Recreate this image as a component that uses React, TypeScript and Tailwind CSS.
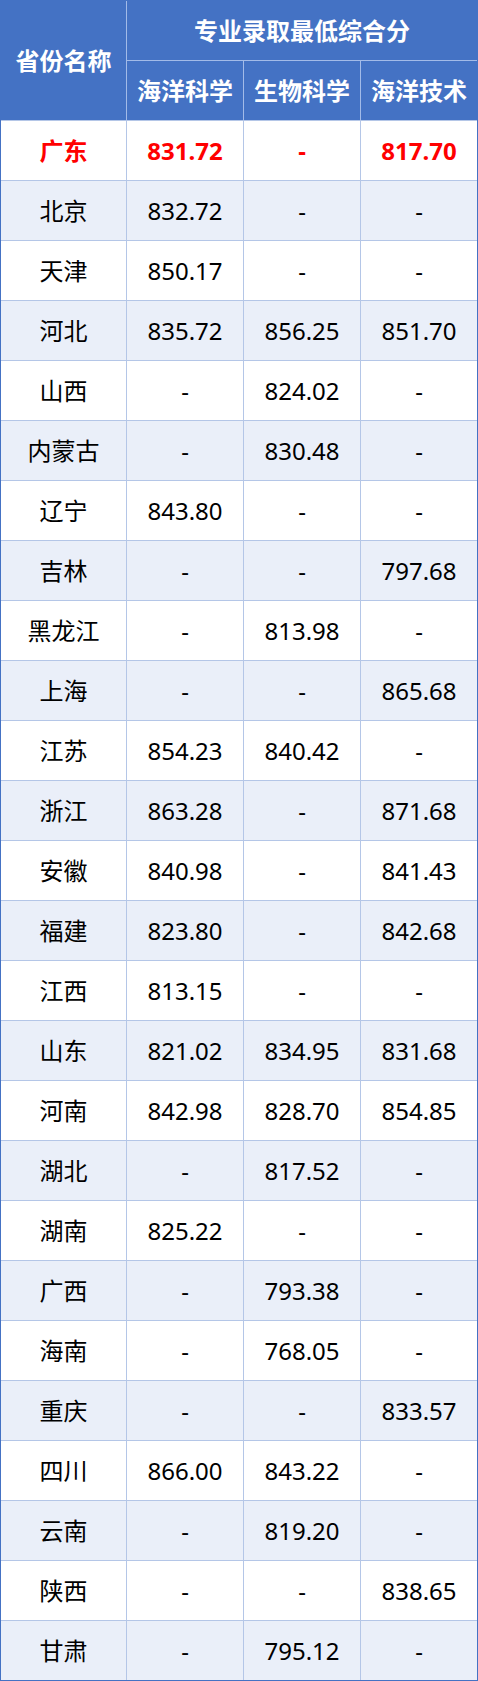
import React from 'react';

type Row = { name: string; a: string; b: string; c: string; hot?: boolean };

const rows: Row[] = [
  { name: '广东', a: '831.72', b: '-', c: '817.70', hot: true },
  { name: '北京', a: '832.72', b: '-', c: '-' },
  { name: '天津', a: '850.17', b: '-', c: '-' },
  { name: '河北', a: '835.72', b: '856.25', c: '851.70' },
  { name: '山西', a: '-', b: '824.02', c: '-' },
  { name: '内蒙古', a: '-', b: '830.48', c: '-' },
  { name: '辽宁', a: '843.80', b: '-', c: '-' },
  { name: '吉林', a: '-', b: '-', c: '797.68' },
  { name: '黑龙江', a: '-', b: '813.98', c: '-' },
  { name: '上海', a: '-', b: '-', c: '865.68' },
  { name: '江苏', a: '854.23', b: '840.42', c: '-' },
  { name: '浙江', a: '863.28', b: '-', c: '871.68' },
  { name: '安徽', a: '840.98', b: '-', c: '841.43' },
  { name: '福建', a: '823.80', b: '-', c: '842.68' },
  { name: '江西', a: '813.15', b: '-', c: '-' },
  { name: '山东', a: '821.02', b: '834.95', c: '831.68' },
  { name: '河南', a: '842.98', b: '828.70', c: '854.85' },
  { name: '湖北', a: '-', b: '817.52', c: '-' },
  { name: '湖南', a: '825.22', b: '-', c: '-' },
  { name: '广西', a: '-', b: '793.38', c: '-' },
  { name: '海南', a: '-', b: '768.05', c: '-' },
  { name: '重庆', a: '-', b: '-', c: '833.57' },
  { name: '四川', a: '866.00', b: '843.22', c: '-' },
  { name: '云南', a: '-', b: '819.20', c: '-' },
  { name: '陕西', a: '-', b: '-', c: '838.65' },
  { name: '甘肃', a: '-', b: '795.12', c: '-' },
];

const font = { fontFamily: '"Noto Sans", "Noto Sans CJK SC", sans-serif' };

export default function App() {
  return (
    <div className="w-[478px] bg-white" style={font}>
      <div className="border border-[#4472c4] text-[24px] leading-none">
        {/* header */}
        <div className="flex bg-[#4472c4] font-bold text-white">
          <div className="flex h-[119px] w-[126px] items-center justify-center border-r border-[#a3bbe8]">
            省份名称
          </div>
          <div className="flex flex-1 flex-col">
            <div className="flex h-[60px] items-center justify-center border-b border-[#a3bbe8]">
              专业录取最低综合分
            </div>
            <div className="grid h-[59px] grid-cols-[117px_117px_116px]">
              <div className="flex items-center justify-center border-r border-[#a3bbe8]">海洋科学</div>
              <div className="flex items-center justify-center border-r border-[#a3bbe8]">生物科学</div>
              <div className="flex items-center justify-center">海洋技术</div>
            </div>
          </div>
        </div>

        {/* body */}
        {rows.map((r, i) => (
          <div
            key={r.name}
            className={`grid h-[60px] grid-cols-[126px_117px_117px_116px] border-t border-[#b4c6e7] ${
              i % 2 === 1 ? 'bg-[#eaeff9]' : 'bg-white'
            } ${r.hot ? 'font-bold text-[#ff0000]' : 'text-black'}`}
          >
            <div className="flex items-center justify-center border-r border-[#b4c6e7]">{r.name}</div>
            <div className="flex items-center justify-center border-r border-[#b4c6e7]">{r.a}</div>
            <div className="flex items-center justify-center border-r border-[#b4c6e7]">{r.b}</div>
            <div className="flex items-center justify-center">{r.c}</div>
          </div>
        ))}
      </div>
    </div>
  );
}
